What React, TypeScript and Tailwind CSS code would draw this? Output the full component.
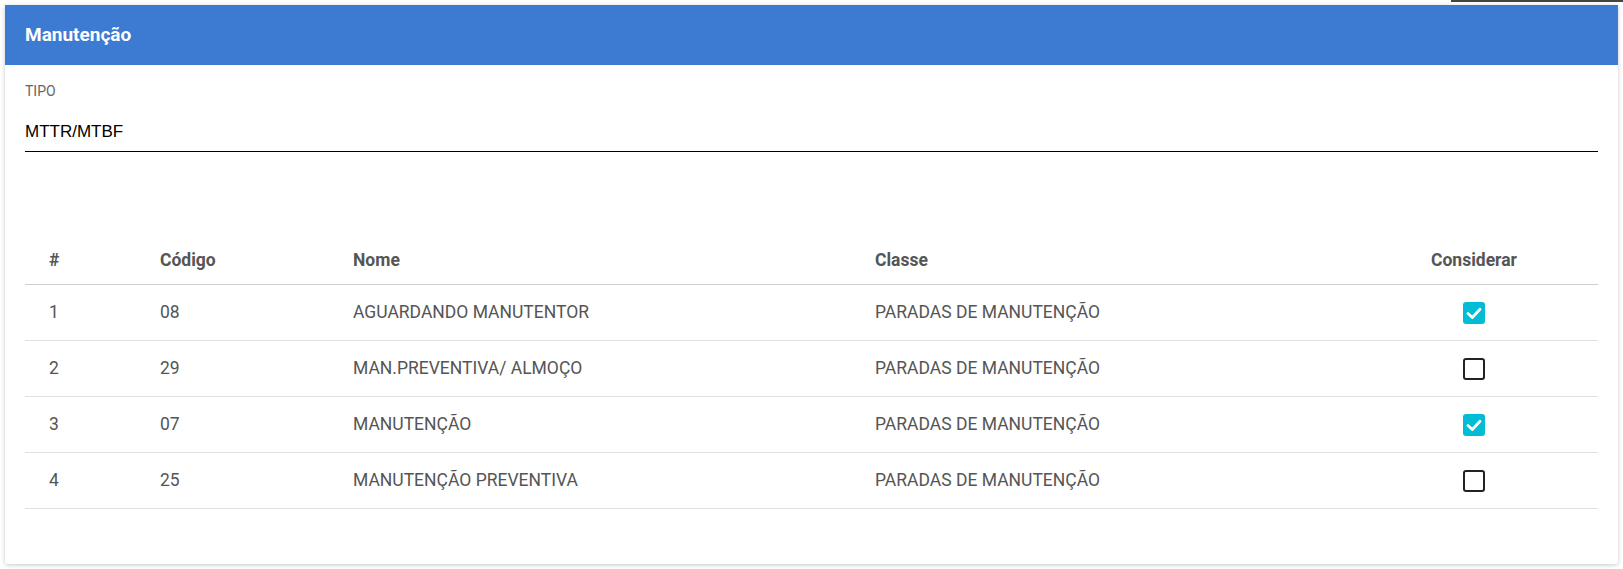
type Row = { id: number; codigo: string; nome: string; classe: string; considerar: boolean };

const rows: Row[] = [
  { id: 1, codigo: "08", nome: "AGUARDANDO MANUTENTOR", classe: "PARADAS DE MANUTENÇÃO", considerar: true },
  { id: 2, codigo: "29", nome: "MAN.PREVENTIVA/ ALMOÇO", classe: "PARADAS DE MANUTENÇÃO", considerar: false },
  { id: 3, codigo: "07", nome: "MANUTENÇÃO", classe: "PARADAS DE MANUTENÇÃO", considerar: true },
  { id: 4, codigo: "25", nome: "MANUTENÇÃO PREVENTIVA", classe: "PARADAS DE MANUTENÇÃO", considerar: false },
];

const cols = "grid grid-cols-[111px_193px_522px_499px_1fr]";

function Checkbox({ checked }: { checked: boolean }) {
  if (checked) {
    return (
      <span className="inline-flex h-[22px] w-[22px] items-center justify-center rounded-[3px] bg-[#00bcd4]">
        <svg width="22" height="22" viewBox="0 0 22 22" fill="none">
          <polyline
            points="5,11.5 9.3,15.5 17,7.2"
            stroke="white"
            strokeWidth="2.8"
            strokeLinecap="round"
            strokeLinejoin="round"
          />
        </svg>
      </span>
    );
  }
  return <span className="inline-block h-[22px] w-[22px] rounded-[3px] border-2 border-[#222]" />;
}

export default function App() {
  return (
    <div className="relative min-h-screen bg-white p-[5px] font-['Roboto',sans-serif]">
      {/* pedaço de outro elemento no topo */}
      <div className="absolute right-0 top-0 h-[2px] w-[172px] bg-[#444]" />

      <div className="rounded-b-[3px] bg-white shadow-[0_1px_4px_rgba(0,0,0,0.22)]">
        {/* === Cabeçalho === */}
        <div className="flex h-[60px] items-center bg-[#3d7bd3] px-5 text-[19px] font-bold text-white">
          Manutenção
        </div>

        <div className="px-5 pb-[55px]">
          {/* Tipo */}
          <div className="pt-[18px] text-[14px] leading-[16px] text-[#666]">TIPO</div>
          <div className="border-b border-black pt-[23px] pb-[9px] font-['Liberation_Sans',Arial,sans-serif] text-[17px] leading-[20px] text-black">
            MTTR/MTBF
          </div>

          {/* Tabela */}
          <div className="mt-[84px] text-[17.5px] text-[#555]">
            <div className={`${cols} h-[49px] items-center border-b border-[#cfcfcf] font-bold`}>
              <div className="pl-6">#</div>
              <div className="pl-6">Código</div>
              <div className="pl-6">Nome</div>
              <div className="pl-6">Classe</div>
              <div className="text-center">Considerar</div>
            </div>
            {rows.map((r) => (
              <div key={r.id} className={`${cols} h-[56px] items-center border-b border-[#e0e0e0]`}>
                <div className="pl-6">{r.id}</div>
                <div className="pl-6">{r.codigo}</div>
                <div className="pl-6">{r.nome}</div>
                <div className="pl-6">{r.classe}</div>
                <div className="flex justify-center">
                  <Checkbox checked={r.considerar} />
                </div>
              </div>
            ))}
          </div>
        </div>
      </div>
    </div>
  );
}
